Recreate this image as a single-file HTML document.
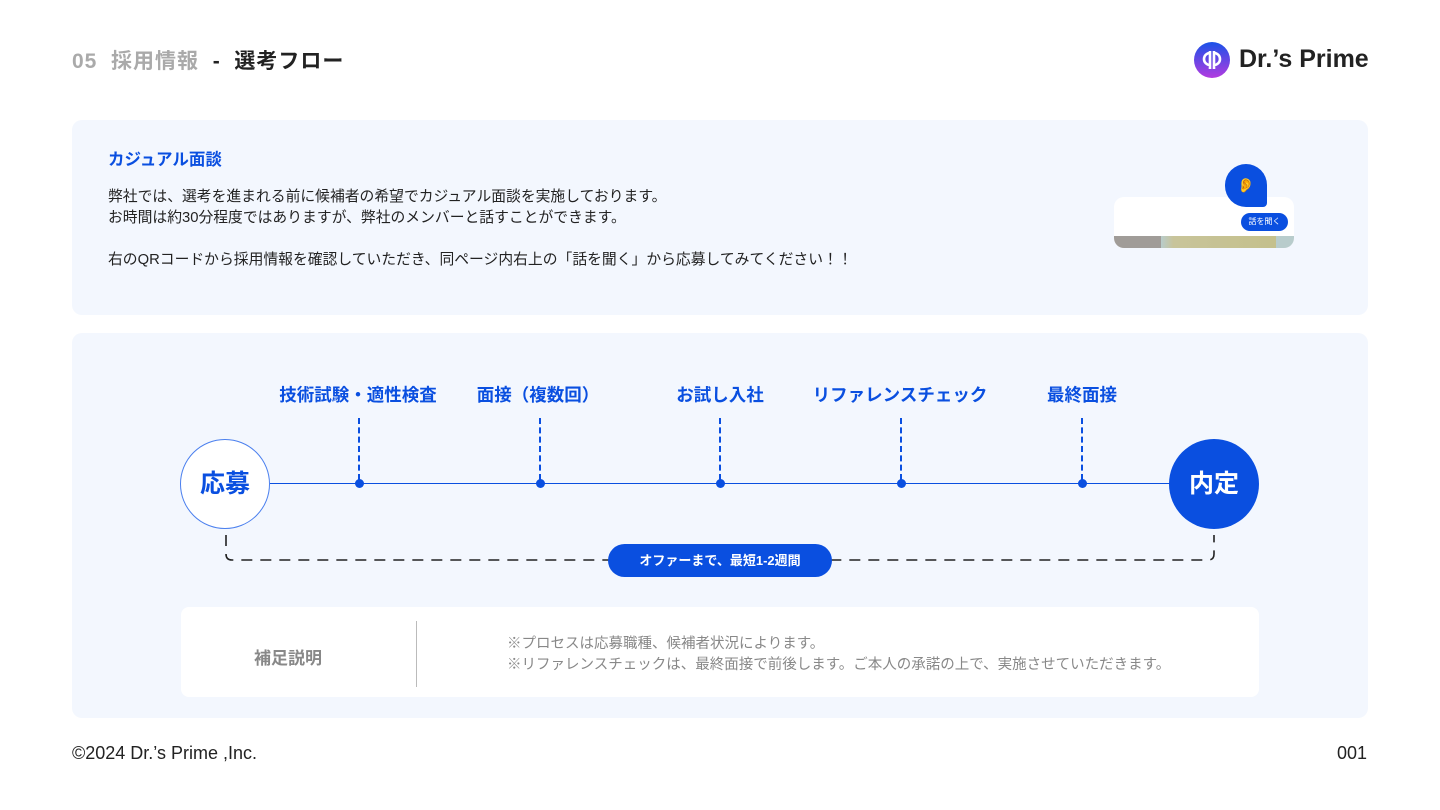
<!DOCTYPE html>
<html><head><meta charset="utf-8"><style>
*{margin:0;padding:0;box-sizing:border-box}
body{width:1440px;height:810px;background:#fff;font-family:"Liberation Sans","Noto Sans CJK JP",sans-serif;position:relative;overflow:hidden;color:#222}
.a{position:absolute}
.panel{background:#f3f7fe;border-radius:10px}
.lbl{font-size:17.5px;font-weight:bold;color:#0a4fe0;transform:translateX(-50%);white-space:nowrap;top:382px}
.vd{width:0;border-left:2px dashed #0a4fe0;top:418px;height:62px}
.dot{width:9px;height:9px;border-radius:50%;background:#0a4fe0;top:479px}
</style></head><body>
<div class="a" style="left:72px;top:45px;font-size:21px;font-weight:bold;color:#aaa;letter-spacing:1px">05&nbsp; 採用情報 <span style="color:#222">&nbsp;-&nbsp; 選考フロー</span></div>
<div class="a" style="left:1194px;top:42px">
<svg width="36" height="36" viewBox="0 0 36 36"><defs><linearGradient id="g" x1="0" y1="0" x2="0" y2="1"><stop offset="0" stop-color="#1a52e8"/><stop offset="1" stop-color="#b23be0"/></linearGradient></defs><circle cx="18" cy="18" r="18" fill="url(#g)"/><path d="M16 9v18M16 11a6 6 0 0 0 0 12M20 9v18M20 11a6 6 0 0 1 0 12" stroke="#fff" stroke-width="2.6" fill="none"/></svg></div>
<div class="a" style="left:1239px;top:45px;font-size:25px;font-weight:bold;color:#222">Dr.’s Prime</div>

<div class="a panel" style="left:72px;top:120px;width:1296px;height:195px"></div>
<div class="a" style="left:108px;top:146px;font-size:16.5px;font-weight:bold;color:#0a4fe0">カジュアル面談</div>
<div class="a" style="left:108px;top:187px;font-size:14.8px;line-height:21px;color:#222">弊社では、選考を進まれる前に候補者の希望でカジュアル面談を実施しております。<br>お時間は約30分程度ではありますが、弊社のメンバーと話すことができます。<br><br>右のQRコードから採用情報を確認していただき、同ページ内右上の「話を聞く」から応募してみてください！！</div>
<div class="a" style="left:1114px;top:197px;width:180px;height:51px;background:#fff;border-radius:10px;overflow:hidden">
<div class="a" style="left:0;bottom:0;width:180px;height:12px;background:linear-gradient(90deg,#a09c98 0,#a09c98 26%,#b8cccc 26%,#c8c49a 33%,#c4c08c 90%,#b8cccc 90%)"></div>
<div class="a" style="left:127px;top:16px;width:47px;height:18px;background:#0a4fe0;border-radius:9px;color:#fff;font-size:8px;text-align:center;line-height:18px">話を聞く</div></div>
<div class="a" style="left:1225px;top:164px;width:42px;height:43px;background:#0a4fe0;border-radius:21px 21px 4px 21px;text-align:center;line-height:43px;font-size:14px">👂</div>

<div class="a panel" style="left:72px;top:333px;width:1296px;height:385px"></div>
<div class="a lbl" style="left:358px">技術試験・適性検査</div>
<div class="a lbl" style="left:538px">面接（複数回）</div>
<div class="a lbl" style="left:720px">お試し入社</div>
<div class="a lbl" style="left:900px">リファレンスチェック</div>
<div class="a lbl" style="left:1082px">最終面接</div>
<div class="a" style="left:270px;top:483px;width:900px;height:1px;background:#0a4fe0"></div>
<div class="a vd" style="left:358px"></div><div class="a vd" style="left:539px"></div><div class="a vd" style="left:719px"></div><div class="a vd" style="left:900px"></div><div class="a vd" style="left:1081px"></div>
<div class="a dot" style="left:355px"></div><div class="a dot" style="left:536px"></div><div class="a dot" style="left:716px"></div><div class="a dot" style="left:897px"></div><div class="a dot" style="left:1078px"></div>
<div class="a" style="left:180px;top:439px;width:90px;height:90px;border-radius:50%;background:#fff;border:1px solid #4a7fee;color:#0a4fe0;font-size:25px;font-weight:bold;text-align:center;line-height:88px">応募</div>
<div class="a" style="left:1169px;top:439px;width:90px;height:90px;border-radius:50%;background:#0a4fe0;color:#fff;font-size:25px;font-weight:bold;text-align:center;line-height:90px">内定</div>
<svg class="a" style="left:220px;top:530px" width="1000" height="36"><path d="M6 5V24Q6 30 12 30H988Q994 30 994 24V5" fill="none" stroke="#222" stroke-width="1.6" stroke-dasharray="11 8"/></svg>
<div class="a" style="left:608px;top:544px;width:224px;height:33px;background:#0a4fe0;border-radius:17px;color:#fff;font-size:13px;font-weight:bold;text-align:center;line-height:33px">オファーまで、最短1-2週間</div>

<div class="a" style="left:181px;top:607px;width:1078px;height:90px;background:#fff;border-radius:8px"></div>
<div class="a" style="left:254px;top:644px;font-size:17px;font-weight:bold;color:#888">補足説明</div>
<div class="a" style="left:416px;top:621px;width:1px;height:66px;background:#bbb"></div>
<div class="a" style="left:507px;top:634px;font-size:14.5px;line-height:21px;color:#888">※プロセスは応募職種、候補者状況によります。<br>※リファレンスチェックは、最終面接で前後します。ご本人の承諾の上で、実施させていただきます。</div>

<div class="a" style="left:72px;top:743px;font-size:18px;color:#222">©2024 Dr.’s Prime ,Inc.</div>
<div class="a" style="left:1337px;top:743px;font-size:18px;color:#222">001</div>
</body></html>
